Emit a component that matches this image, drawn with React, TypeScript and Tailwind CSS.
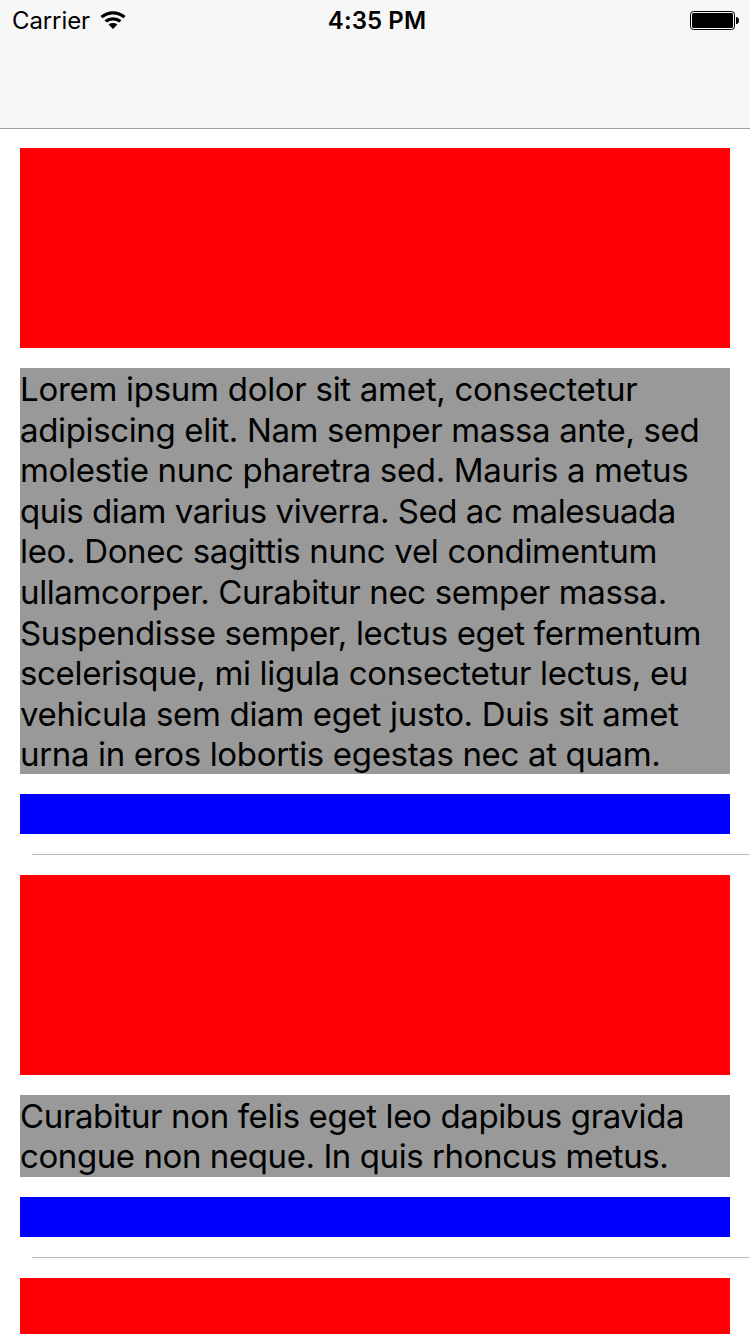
import React from "react";

type Line = { text: string; tracking: string };

const first: Line[] = [
  { text: "Lorem ipsum dolor sit amet, consectetur", tracking: "tracking-[-0.28px]" },
  { text: "adipiscing elit. Nam semper massa ante, sed", tracking: "tracking-[-0.36px]" },
  { text: "molestie nunc pharetra sed. Mauris a metus", tracking: "tracking-[-0.34px]" },
  { text: "quis diam varius viverra. Sed ac malesuada", tracking: "tracking-[-0.46px]" },
  { text: "leo. Donec sagittis nunc vel condimentum", tracking: "tracking-[-0.33px]" },
  { text: "ullamcorper. Curabitur nec semper massa.", tracking: "tracking-[-0.375px]" },
  { text: "Suspendisse semper, lectus eget fermentum", tracking: "tracking-[-0.34px]" },
  { text: "scelerisque, mi ligula consectetur lectus, eu", tracking: "tracking-[-0.34px]" },
  { text: "vehicula sem diam eget justo. Duis sit amet", tracking: "tracking-[-0.32px]" },
  { text: "urna in eros lobortis egestas nec at quam.", tracking: "tracking-[-0.34px]" },
];

const second: Line[] = [
  { text: "Curabitur non felis eget leo dapibus gravida", tracking: "tracking-[-0.37px]" },
  { text: "congue non neque. In quis rhoncus metus.", tracking: "tracking-[-0.42px]" },
];

function Paragraph({ lines, size }: { lines: Line[]; size: string }) {
  return (
    <div className={`mt-5 bg-[#999999] pt-px text-[33px] text-black ${size}`}>
      {lines.map((l) => (
        <div key={l.text} className={`whitespace-nowrap [font-feature-settings:'calt'_0,'liga'_0] ${l.tracking}`}>{l.text}</div>
      ))}
    </div>
  );
}

function Cell({ lines, size, padding }: { lines: Line[]; size: string; padding: string }) {
  return (
    <section className={`shrink-0 px-5 ${padding}`}>
      <div className="h-[200px] bg-[#ff0006]" />
      <Paragraph lines={lines} size={size} />
      <div className="mt-5 h-10 bg-[#0000ff]" />
    </section>
  );
}

export default function App() {
  return (
    <div className="flex h-[1334px] w-[750px] flex-col overflow-hidden bg-white font-['Inter','Liberation_Sans',sans-serif]">
      <header className="h-[129px] shrink-0 border-b border-[#a0a0a2] bg-[#f7f7f7]">
        <div className="grid h-[42px] grid-cols-3 items-center pl-3 pr-[11px] text-[24px] text-black">
          <div className="flex items-center gap-2.5">
            <span className="tracking-[-0.1px]">Carrier</span>
            <svg width="26" height="20" viewBox="0 0 26 20">
              <path d="M.4 5.1Q6 .3 13 .3T25.6 5.1L23.4 7.3Q18.8 3.5 13 3.5T2.6 7.3Z" />
              <path d="M4.5 9.3Q8.2 6.2 13 6.2T21.5 9.3L19.2 11.6Q16.5 9.4 13 9.4T6.8 11.6Z" />
              <path d="M8.6 13.4Q10.5 12 13 12T17.4 13.4L13 18Z" />
            </svg>
          </div>
          <span className="pl-[3px] text-center font-semibold tracking-[0.1px]">4:35 PM</span>
          <svg className="justify-self-end" width="49" height="20" viewBox="0 0 49 20">
            <rect x=".5" y=".5" width="44" height="18" rx="3" fill="none" stroke="black" />
            <rect x="2" y="2" width="41" height="15" rx="1.5" />
            <path d="M46 6h1q2 .5 2 3.5t-2 3.5h-1z" />
          </svg>
        </div>
      </header>
      <Cell lines={first} size="h-[406px] leading-[40.6px]" padding="pt-[19px]" />
      <div className="ml-8 mt-5 h-px shrink-0 bg-[#bcbbc1]" />
      <Cell lines={second} size="h-[82px] leading-[40px]" padding="pt-5" />
      <div className="ml-8 mt-5 h-px shrink-0 bg-[#bcbbc1]" />
      <section className="shrink-0 px-5 pt-5">
        <div className="h-[200px] bg-[#ff0006]" />
      </section>
    </div>
  );
}
